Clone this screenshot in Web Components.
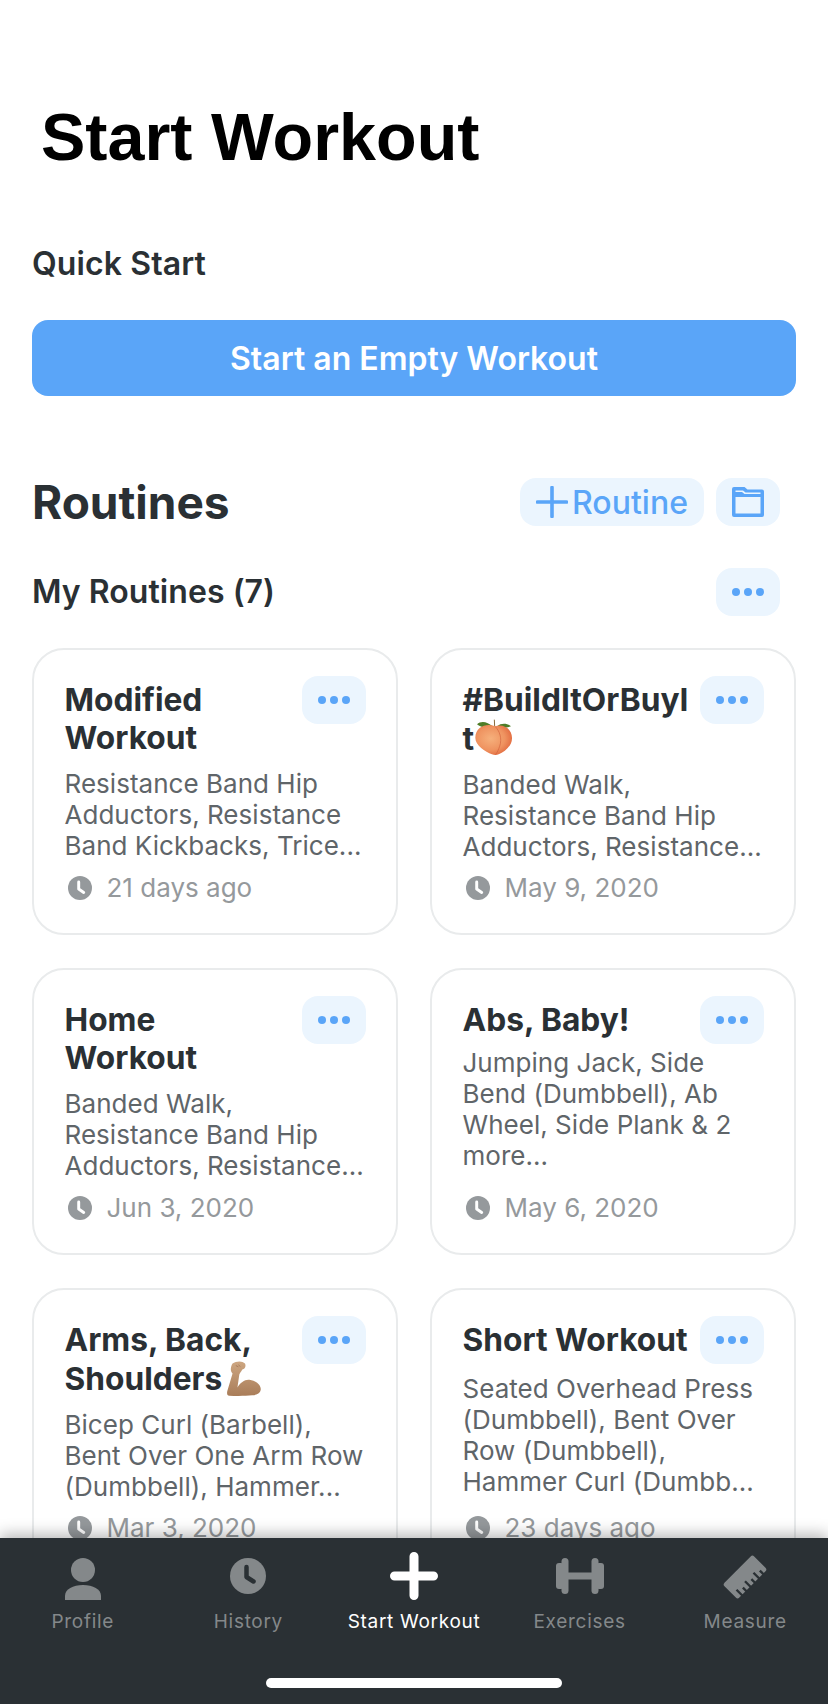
<!DOCTYPE html>
<html><head><meta charset="utf-8">
<style>
html,body{margin:0;padding:0;background:#fff}
body{width:828px;height:1704px;overflow:hidden}
</style></head><body>
<template id="t-app">
<style>
:host{display:flex;flex-direction:column;width:828px;height:1704px;font-family:Inter,"Noto Sans",sans-serif;color:#2a3034;background:#fff;overflow:hidden}
.scroll{flex:1;min-height:0;overflow:hidden;padding:0 32px;box-sizing:border-box}
h1{font:700 66.500px/72px "Liberation Sans",Arial,sans-serif;color:#000;margin:101px 0 0 9px}
.qs{font-size:32px;line-height:38px;font-weight:600;margin:72px 0 0 0;letter-spacing:.1px}
.row{display:flex;align-items:center;justify-content:space-between}
h2{margin:0;font-size:46px;line-height:54px;font-weight:700}
h3{margin:0;font-size:32px;line-height:38px;font-weight:600;letter-spacing:.05px}
.rt{margin-top:79px}
.acts{display:flex;gap:12px;margin-right:16px}
.mine{margin-top:39px}
.mine .btn{margin-right:16px}
.grid{display:grid;grid-template-columns:366px 366px;column-gap:32px;row-gap:33px;margin-top:32px}
</style>
<div class="scroll">
<h1>Start Workout</h1>
<div class="qs">Quick Start</div>
<primary-button>Start an Empty Workout</primary-button>
<div class="row rt"><h2>Routines</h2>
<div class="acts"><tint-button wide><svg slot="icon" width="32" height="32" viewBox="0 0 32 32"><path d="M16 1.500v29M1.500 16h29" stroke="#5aa5f8" stroke-width="3.600" stroke-linecap="round" fill="none"/></svg>Routine</tint-button>
<tint-button><svg slot="icon" width="32" height="30" viewBox="0 0 32 30"><path fill="#5aa5f8" fill-rule="evenodd" d="M2 0H12.500l3 2.500H30a2 2 0 0 1 2 2V28a2 2 0 0 1-2 2H2a2 2 0 0 1-2-2V2a2 2 0 0 1 2-2zM3.500 10V26.500H28.500V10zM3.500 3.500V5H10l2.500 2H28.500V5.500H13.500L11 3.500z"/></svg></tint-button></div></div>
<div class="row mine"><h3>My Routines (7)</h3><tint-button class="btn" dots></tint-button></div>
<div class="grid"><slot></slot></div>
</div>
<slot name="tabs"></slot>
</template>

<template id="t-primary">
<style>:host{display:flex;align-items:center;justify-content:center;height:76px;margin-top:37px;border-radius:16px;background:#5aa5f8;color:#fff;font-size:32px;font-weight:600}</style><slot></slot>
</template>

<template id="t-tint">
<style>:host{display:inline-flex;align-items:center;justify-content:center;box-sizing:border-box;width:64px;height:48px;border-radius:16px;background:#ebf5fe;color:#5aa5f8;font-size:32px;font-weight:500;flex:none}
:host([wide]){width:184px;gap:4px;padding-left:4px}
.d{display:flex;gap:4px}.d i{width:8px;height:8px;border-radius:50%;background:#5aa5f8}
</style><slot name="icon"></slot><slot></slot><span class="d" part="dots"></span>
</template>

<template id="t-card">
<style>:host{display:flex;flex-direction:column;box-sizing:border-box;height:287px;border:2px solid #e9ebec;border-radius:32px;padding:31px 26px 0 30.500px;position:relative;min-width:0}
.t{font-size:31.700px;line-height:38px;font-weight:700;color:#2a3034;min-height:38px}
.d{font-size:26px;line-height:31px;color:#5f6569;margin-top:var(--desc-gap,11px);white-space:nowrap;letter-spacing:.03px}
.f{display:flex;align-items:center;gap:15px;margin-top:auto;margin-bottom:30px;font-size:26px;line-height:30px;color:#95999c;white-space:nowrap}
.m{position:absolute;top:26px;right:30px}
</style>
<div class="t"><slot name="title"></slot></div>
<div class="d"><slot></slot></div>
<div class="f"><svg style="margin-left:3px" width="24" height="24" viewBox="0 0 26 26"><circle cx="13" cy="13" r="13" fill="#95999c"/><path d="M11.600 6.500V14l5.400 3.800" stroke="#fff" stroke-width="3.200" fill="none" stroke-linecap="round" stroke-linejoin="round"/></svg><slot name="date"></slot></div>
<tint-button class="m" dots></tint-button>
</template>

<template id="t-tabs">
<style>:host{display:flex;flex-direction:column;position:relative;height:166px;flex:none;background:#2a3034;box-shadow:0 -4px 14px rgba(0,0,0,.28)}
.r{display:grid;grid-template-columns:repeat(5,1fr);padding-top:14px}
.h{width:296px;height:10px;border-radius:5px;background:#fff;margin:44px auto 0}
</style>
<div class="r"><slot></slot></div><div class="h"></div>
</template>

<template id="t-tab">
<style>:host{display:flex;flex-direction:column;align-items:center;color:#84888a;font-size:19px;line-height:24px;letter-spacing:.7px}
:host([active]){color:#fff}
.i{height:48px;margin-bottom:10px;display:flex;align-items:flex-start;justify-content:center}
</style><div class="i"><slot name="icon"></slot></div><slot></slot>
</template>

<start-app>
<routine-card><span slot="title">Modified<br>Workout</span>Resistance Band Hip<br>Adductors, Resistance<br>Band Kickbacks, Trice...<span slot="date">21 days ago</span></routine-card>
<routine-card><span slot="title">#BuildItOrBuyI<br>t<svg style="vertical-align:-7px;margin-left:1px" width="38" height="38" viewBox="24 20 114 114" role="img" aria-label="peach"><defs><radialGradient id="pe" cx=".42" cy=".45" r=".7"><stop offset="0" stop-color="#f6b07c"/><stop offset=".55" stop-color="#ef9360"/><stop offset="1" stop-color="#dd5a32"/></radialGradient></defs><path d="M30 36C42 24 62 28 76 42 60 48 40 46 30 36zM90 42c12-10 30-10 42 0-14 6-30 6-42 0z" fill="#4f7d28"/><path d="M82 22l1 20" stroke="#8a6a3a" stroke-width="3"/><path d="M84 42C60 32 26 42 25 76c0 24 30 42 50 50 6 2.400 14 2.400 20 0 18-8 41-26 40-50-1-30-30-42-51-34z" fill="url(#pe)"/><path d="M84 42c14 14 22 36 14 60-3 8-6 16-12 25" stroke="#d0603a" stroke-width="2.500" fill="none" opacity=".75"/></svg></span>Banded Walk,<br>Resistance Band Hip<br>Adductors, Resistance...<span slot="date">May 9, 2020</span></routine-card>
<routine-card><span slot="title">Home<br>Workout</span>Banded Walk,<br>Resistance Band Hip<br>Adductors, Resistance...<span slot="date">Jun 3, 2020</span></routine-card>
<routine-card style="--desc-gap:8px"><span slot="title">Abs, Baby!</span>Jumping Jack, Side<br>Bend (Dumbbell), Ab<br>Wheel, Side Plank &amp; 2<br>more...<span slot="date">May 6, 2020</span></routine-card>
<routine-card><span slot="title">Arms, Back,<br>Shoulders<svg style="vertical-align:-7px;margin-left:4px" width="36" height="38" viewBox="20 18 110 116" role="img" aria-label="flexed biceps"><defs><linearGradient id="ar" x1="0" y1="0" x2="0" y2="1"><stop offset="0" stop-color="#cda681"/><stop offset="1" stop-color="#a97d59"/></linearGradient></defs><path fill="url(#ar)" d="M30 130C24 130 22 124 24 116L40 62C32 55 34 42 40 32 50 24 70 22 78 32 82 40 78 48 70 50 66 58 60 62 60 70L55 105C65 88 80 78 95 82 115 86 128 100 126 112 124 124 112 128 100 129 80 131 50 131 30 130Z"/><path d="M50 38l8 4M58 36l6 5" stroke="#96694a" stroke-width="2" fill="none"/></svg></span>Bicep Curl (Barbell),<br>Bent Over One Arm Row<br>(Dumbbell), Hammer...<span slot="date">Mar 3, 2020</span></routine-card>
<routine-card style="--desc-gap:14px"><span slot="title">Short Workout</span>Seated Overhead Press<br>(Dumbbell), Bent Over<br>Row (Dumbbell),<br>Hammer Curl (Dumbb...<span slot="date">23 days ago</span></routine-card>
<tab-bar slot="tabs">
<tab-item><svg slot="icon" style="margin-top:6px" width="36" height="42" viewBox="0 0 36 42" fill="#84888a"><circle cx="18" cy="12" r="12"/><path d="M0 42v-4c0-7 8-11 18-11s18 4 18 11v4z"/></svg>Profile</tab-item>
<tab-item><svg slot="icon" style="margin-top:6px" width="36" height="36" viewBox="0 0 36 36"><circle cx="18" cy="18" r="18" fill="#84888a"/><path d="M16.500 9v10l7 4.500" stroke="#2a3034" stroke-width="4.500" fill="none" stroke-linecap="round" stroke-linejoin="round"/></svg>History</tab-item>
<tab-item active><svg slot="icon" width="48" height="48" viewBox="0 0 48 48"><path d="M24 4.500v39M4.500 24h39" stroke="#fff" stroke-width="9" stroke-linecap="round"/></svg>Start Workout</tab-item>
<tab-item><svg slot="icon" style="margin-top:6px" width="48" height="36" viewBox="0 0 48 36" fill="#84888a"><rect x="0" y="5" width="8" height="26" rx="3"/><rect x="5.500" y="0" width="7" height="36" rx="3.500"/><rect x="35.500" y="0" width="7" height="36" rx="3.500"/><rect x="40" y="5" width="8" height="26" rx="3"/><rect x="11" y="14.500" width="26" height="7"/></svg>Exercises</tab-item>
<tab-item><svg slot="icon" style="margin-top:2px" width="46" height="46" viewBox="0 0 46 46"><g transform="rotate(-45 23 23)"><rect x="2" y="12.500" width="42" height="21" rx="2.500" fill="#84888a"/><path d="M8 34.500v-8.500M14 34.500v-5.500M20 34.500v-8.500M26 34.500v-5.500M32 34.500v-8.500M38 34.500v-5.500" stroke="#2a3034" stroke-width="2.400"/></g></svg>Measure</tab-item>
</tab-bar>
</start-app>
<script>
function reg(name,tid,extra){customElements.define(name,class extends HTMLElement{constructor(){super();const s=this.attachShadow({mode:'open'});s.appendChild(document.getElementById(tid).content.cloneNode(true));if(extra)extra(this,s);}});}
reg('start-app','t-app');
reg('primary-button','t-primary');
reg('tint-button','t-tint',(h,s)=>{if(h.hasAttribute('dots')){s.querySelector('.d').innerHTML='<i></i><i></i><i></i>';}});
reg('routine-card','t-card');
reg('tab-bar','t-tabs');
reg('tab-item','t-tab');
</script>
</body></html>
